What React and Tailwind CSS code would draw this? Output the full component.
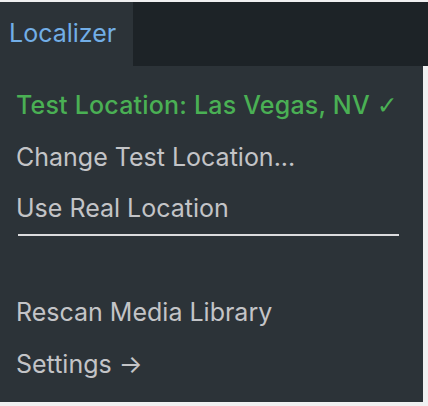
const items = [
  { label: 'Change Test Location...', h: 'h-[52px]' },
  { label: 'Use Real Location', h: 'h-[50px]' },
];

export default function App() {
  return (
    <div
      className="w-[428px] h-[406px] bg-[#f0f0f1] pt-[2px] overflow-hidden"
      style={{ fontFamily: 'Inter, "Open Sans", sans-serif' }}
    >
      {/* Admin bar */}
      <div className="flex h-[64px] bg-[#1d2327]">
        <div className="w-[133px] bg-[#2c3338] flex items-center pl-[9px] text-[25px] text-[#72aee6]">
          Localizer
        </div>
      </div>

      {/* Dropdown */}
      <div className="w-[423px] h-[336px] bg-[#2c3338] pt-[14px] px-[16px]">
        <div className="h-[52px] flex items-center text-[25px] text-[#4ab054] font-medium tracking-[0.2px]">
          Test Location: Las Vegas, NV&nbsp;
          <span className="font-normal" style={{ fontFamily: '"DejaVu Sans", sans-serif' }}>✓</span>
        </div>
        {items.map((item) => (
          <div key={item.label} className={`${item.h} flex items-center text-[25px] text-[#c3c4c7]`}>
            {item.label}
          </div>
        ))}
        <div className="ml-[2px] w-[381px] h-[2px] bg-[#dcdcde]" />
        <div className="h-[52px] mt-[51px] flex items-center text-[25px] text-[#c3c4c7]">
          Rescan Media Library
        </div>
        <div className="h-[52px] flex items-center text-[25px] text-[#c3c4c7]">
          Settings →
        </div>
      </div>
    </div>
  );
}
